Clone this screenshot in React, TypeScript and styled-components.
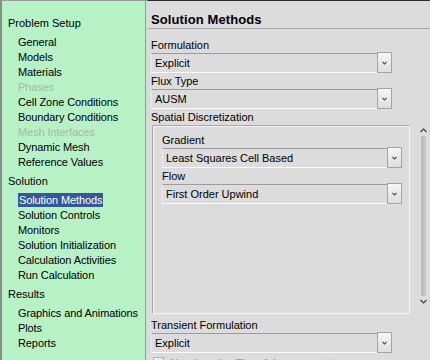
import * as React from "react";
import styled, {createGlobalStyle} from "styled-components";

const GlobalStyle = createGlobalStyle`
    html, body {
        margin: 0;
        padding: 0;
        background: #dcdcdc;
    }
`;

const Frame = styled.div`
    display: flex;
    width: 430px;
    height: 360px;
    overflow: hidden;
    font-family: "Liberation Sans", Arial, sans-serif;
    font-size: 11px;
    color: #000;
`;

const NavPanel = styled.div`
    width: 146px;
    flex: none;
    box-sizing: border-box;
    background: #b6f2c6;
    border-left: 2px solid #8a8a8a;
    border-top: 1px solid #9a9a9a;
    border-right: 1px solid #9a9a9a;
    padding-top: 15px;
`;

const NavGroup = styled.div`
    margin-bottom: 4px;
`;

const NavHeader = styled.div`
    height: 15px;
    line-height: 15px;
    padding-left: 6px;
    margin-bottom: 4px;
`;

const NavItem = styled.div<{ $disabled?: boolean }>`
    height: 15px;
    line-height: 15px;
    padding-left: 16px;
    letter-spacing: -0.1px;
    color: ${p => p.$disabled ? "#a6b9aa" : "#000"};
`;

const Selected = styled.span`
    background: #33599a;
    color: #fff;
    padding: 1px;
`;

const MainPanel = styled.div`
    flex: 1;
    display: flex;
    flex-direction: column;
    background: #dcdcdc;
    border-left: 2px solid #c4e6cc;
    border-top: 1px solid #2c2c2c;
`;

const Title = styled.div`
    height: 29px;
    box-sizing: border-box;
    padding: 11px 0 0 3px;
    font-size: 13px;
    font-weight: bold;
    line-height: 16px;
    letter-spacing: 0.1px;
    border-bottom: 1px solid #a6a6a6;
`;

const Body = styled.div`
    padding: 10px 0 0 3px;
    display: flex;
    flex-direction: column;
`;

const Label = styled.div<{ $gapAbove?: number }>`
    height: 14px;
    line-height: 13px;
    margin-top: ${p => p.$gapAbove || 0}px;
`;

const ComboRow = styled.div<{ $width: number }>`
    display: flex;
    width: ${p => p.$width}px;
    height: 20px;
    margin-bottom: 2px;
`;

const ComboField = styled.div`
    flex: 1;
    box-sizing: border-box;
    border-top: 1px solid #9c9c9c;
    border-left: 1px solid #ececec;
    border-bottom: 1px solid #fafafa;
    padding-left: 3px;
    line-height: 18px;
    white-space: nowrap;
    overflow: hidden;
`;

const ComboButton = styled.div`
    width: 15px;
    flex: none;
    box-sizing: border-box;
    margin-top: -1px;
    height: 21px;
    border: 1px solid #a4a4a4;
    background: linear-gradient(#f6f6f6, #dedede);
    display: flex;
    align-items: center;
    justify-content: center;
`;

const ScrollArea = styled.div`
    display: flex;
    height: 189px;
`;

const GroupBox = styled.div`
    width: 258px;
    box-sizing: border-box;
    margin-left: 1px;
    border: 1px solid #a8a8a8;
    border-right-color: #f4f4f4;
    border-bottom-color: #f4f4f4;
    box-shadow: inset 1px 1px 0 #f4f4f4;
    padding: 8px 0 0 9px;
`;

const ScrollBar = styled.div`
    flex: 1;
    display: flex;
    flex-direction: column;
    align-items: center;
    padding: 3px 0 0 6px;
`;

const Thumb = styled.div`
    width: 5px;
    height: 160px;
    margin: 3px 0;
    background: linear-gradient(90deg, #b8b8b8, #cacaca);
`;

const CheckRow = styled.div`
    display: flex;
    align-items: flex-start;
    gap: 6px;
    margin-top: 2px;
    color: #9a9a9a;
`;

const CheckBox = styled.div`
    width: 9px;
    height: 9px;
    margin-left: 2px;
    border: 1px solid #b4b4b4;
    background: #ececec;
`;

const Chevron = ({up}: { up?: boolean }) => (
    <svg width="7" height="5" viewBox="0 0 7 5">
        <polyline points={up ? "0.5,4 3.5,1 6.5,4" : "0.5,1 3.5,4 6.5,1"} fill="none" stroke="#404040" strokeWidth="1.2"/>
    </svg>
);

const Combo = ({value, width}: { value: string, width: number }) => (
    <ComboRow $width={width}>
        <ComboField>{value}</ComboField>
        <ComboButton>
            <svg width="5" height="4" viewBox="0 0 5 4">
                <polyline points="0.5,1 2.5,3 4.5,1" fill="none" stroke="#505050" strokeWidth="1.1"/>
            </svg>
        </ComboButton>
    </ComboRow>
);

const navTree = [
    {
        title: "Problem Setup",
        items: ["General", "Models", "Materials", "-Phases", "Cell Zone Conditions", "Boundary Conditions",
            "-Mesh Interfaces", "Dynamic Mesh", "Reference Values"]
    },
    {
        title: "Solution",
        items: ["*Solution Methods", "Solution Controls", "Monitors", "Solution Initialization",
            "Calculation Activities", "Run Calculation"]
    },
    {
        title: "Results",
        items: ["Graphics and Animations", "Plots", "Reports"]
    }
];

export default function App() {
    return (
        <Frame>
            <GlobalStyle/>
            <NavPanel>
                {navTree.map(group => (
                    <NavGroup key={group.title}>
                        <NavHeader>{group.title}</NavHeader>
                        {group.items.map(item => {
                            if (item[0] === "-") {
                                return <NavItem key={item} $disabled>{item.slice(1)}</NavItem>;
                            }
                            if (item[0] === "*") {
                                return <NavItem key={item}><Selected>{item.slice(1)}</Selected></NavItem>;
                            }
                            return <NavItem key={item}>{item}</NavItem>;
                        })}
                    </NavGroup>
                ))}
            </NavPanel>
            <MainPanel>
                <Title>Solution Methods</Title>
                <Body>
                    <Label>Formulation</Label>
                    <Combo value="Explicit" width={241}/>
                    <Label>Flux Type</Label>
                    <Combo value="AUSM" width={241}/>
                    <Label>Spatial Discretization</Label>
                    <ScrollArea>
                        <GroupBox>
                            <Label>Gradient</Label>
                            <Combo value="Least Squares Cell Based" width={240}/>
                            <Label $gapAbove={1}>Flow</Label>
                            <Combo value="First Order Upwind" width={240}/>
                        </GroupBox>
                        <ScrollBar>
                            <Chevron up/>
                            <Thumb/>
                            <Chevron/>
                        </ScrollBar>
                    </ScrollArea>
                    <Label $gapAbove={5}>Transient Formulation</Label>
                    <Combo value="Explicit" width={241}/>
                    <CheckRow>
                        <CheckBox/>
                        <span>Non-Iterative Time Advancement</span>
                    </CheckRow>
                </Body>
            </MainPanel>
        </Frame>
    );
}
